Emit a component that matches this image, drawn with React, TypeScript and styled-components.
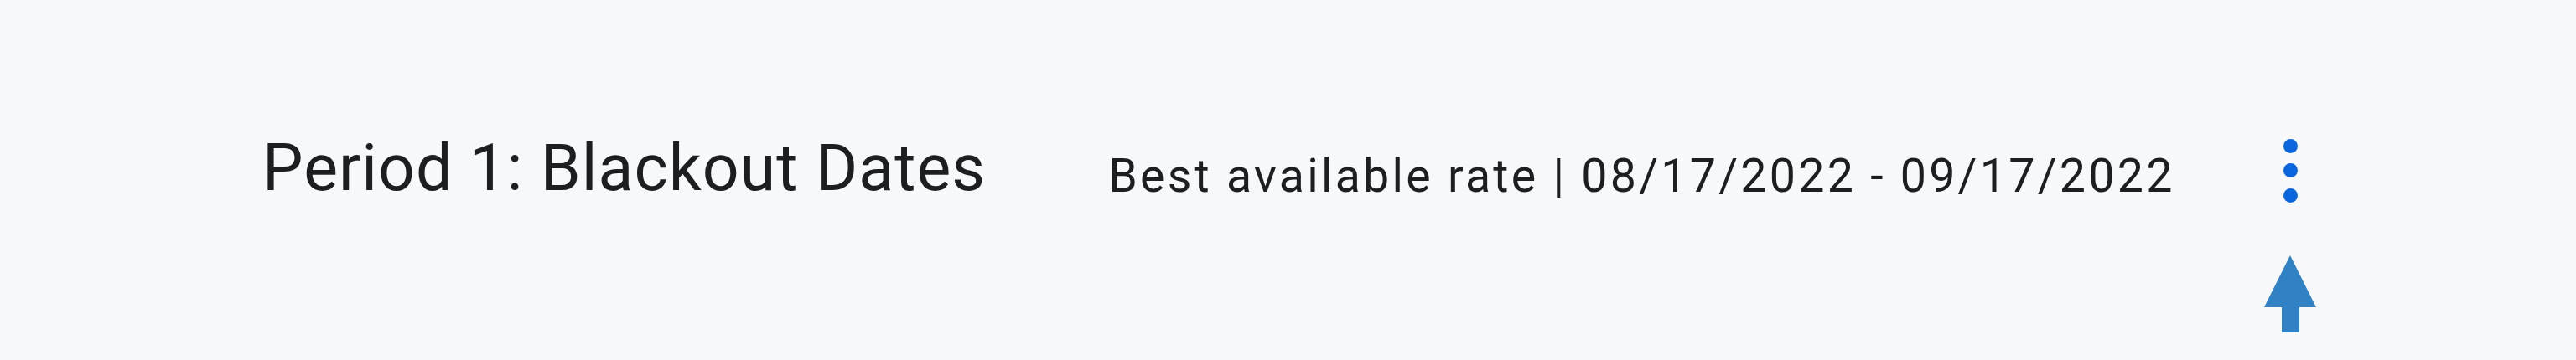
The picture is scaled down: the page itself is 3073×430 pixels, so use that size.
import React from "react";
import styled, { createGlobalStyle } from "styled-components";

const GlobalStyle = createGlobalStyle`
  html, body {
    margin: 0;
    padding: 0;
    background: #f7f8fa;
  }
  body {
    font-family: Roboto, "Liberation Sans", Arial, sans-serif;
    color: #1c1e21;
  }
`;

const Page = styled.div`
  width: 3073px;
  height: 430px;
  background: #f7f8fa;
  box-sizing: border-box;
  padding: 156px 0 0 313px;
`;

const Row = styled.div`
  display: flex;
  align-items: flex-start;
`;

const Title = styled.h2`
  margin: 0;
  font-family: Roboto, "Liberation Sans", Arial, sans-serif;
  font-weight: 400;
  font-size: 77px;
  line-height: 90px;
  letter-spacing: 1.05px;
  color: #1c1e21;
  white-space: nowrap;
`;

const Meta = styled.div`
  margin: 23px 0 0 146px;
  font-family: Roboto, "Liberation Sans", Arial, sans-serif;
  font-weight: 400;
  font-size: 55.5px;
  line-height: 63px;
  letter-spacing: 3.25px;
  color: #1c1e21;
  white-space: nowrap;
`;

const MenuButton = styled.button`
  position: relative;
  margin: 9.5px 0 0 129px;
  padding: 0;
  border: none;
  background: transparent;
  display: flex;
  flex-direction: column;
  align-items: center;
  gap: 12.5px;
  cursor: pointer;
`;

const Dot = styled.span`
  display: block;
  width: 17px;
  height: 17px;
  border-radius: 50%;
  background: #0a66dc;
`;

const Pointer = styled.svg`
  position: absolute;
  left: 50%;
  top: 139.5px;
  transform: translateX(-50%);
`;

export default function App() {
  return (
    <>
      <GlobalStyle />
      <Page>
        <Row>
          <Title>Period 1: Blackout Dates</Title>
          <Meta>Best available rate | 08/17/2022 - 09/17/2022</Meta>
          <MenuButton aria-label="More actions">
            <Dot />
            <Dot />
            <Dot />
            <Pointer width="62" height="92" viewBox="0 0 62 92" aria-hidden="true">
              <polygon points="31,0 62,62 42,62 42,92 21,92 21,62 0,62" fill="#3182c4" />
            </Pointer>
          </MenuButton>
        </Row>
      </Page>
    </>
  );
}
